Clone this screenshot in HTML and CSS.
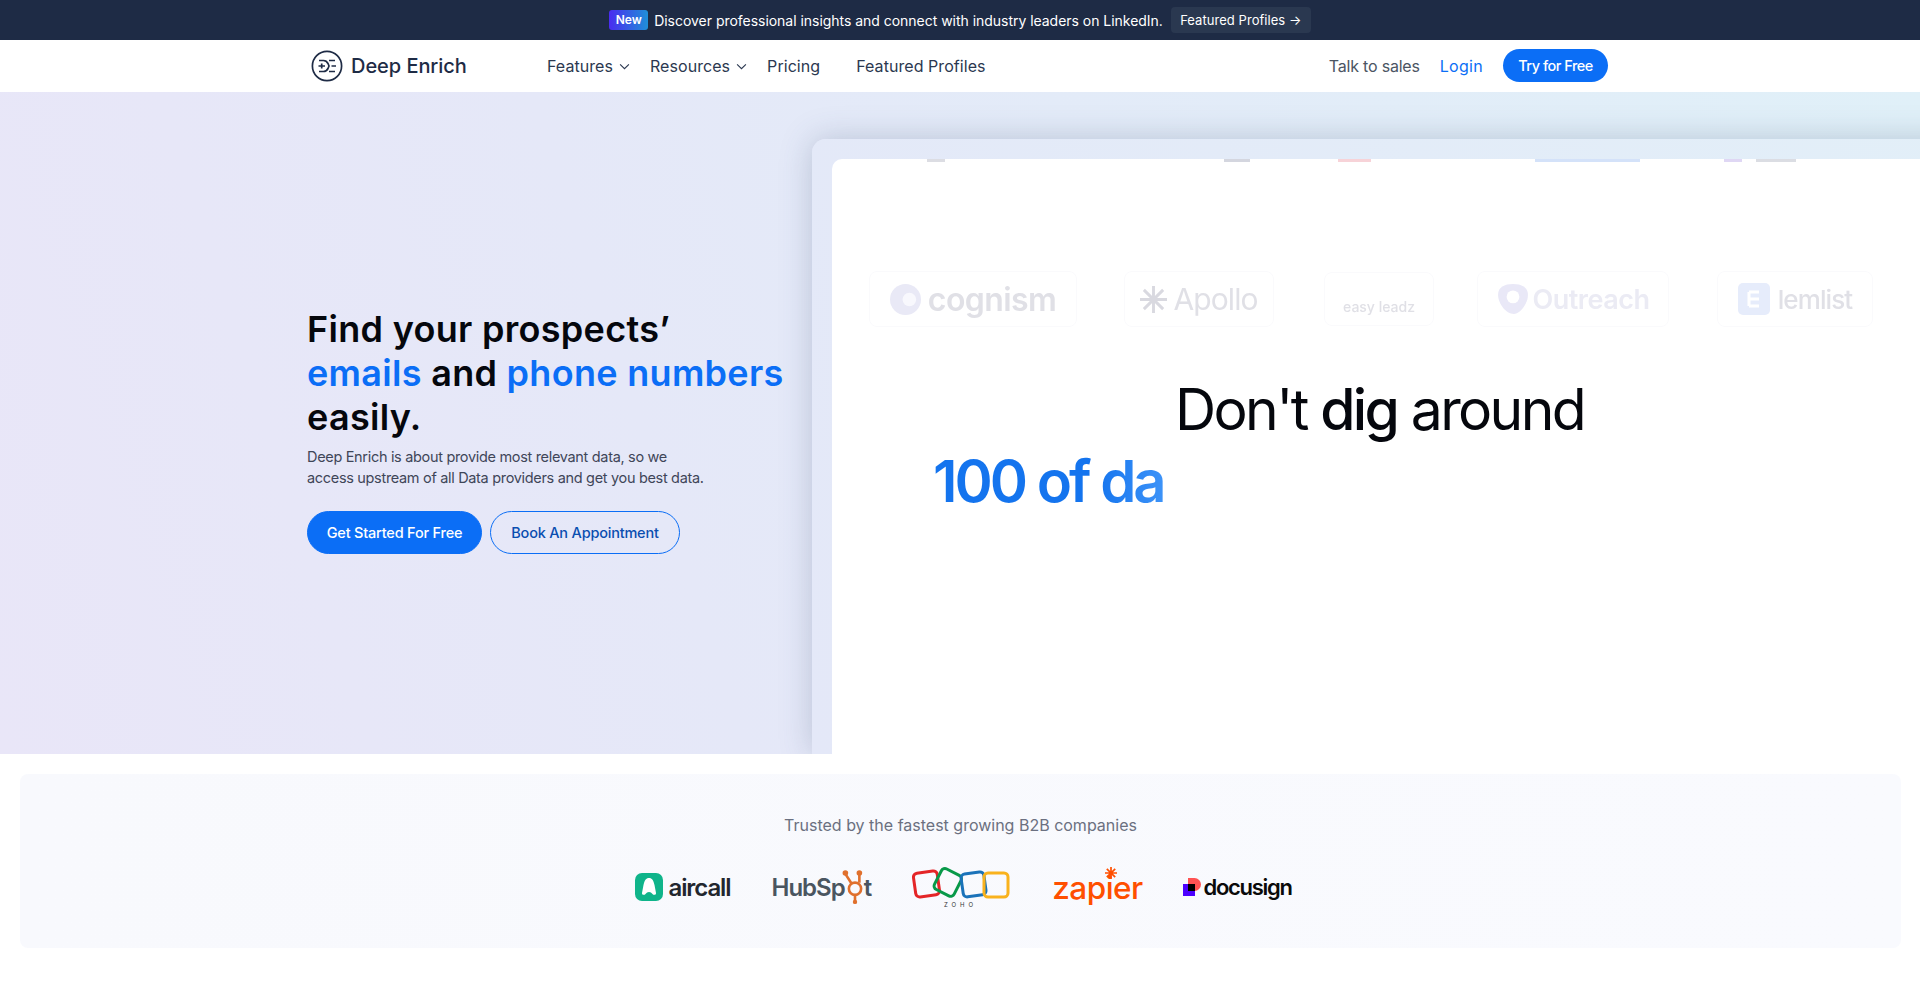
FILE: index.html
```html
<!DOCTYPE html>
<html lang="en">
<head>
<meta charset="utf-8">
<title>Deep Enrich</title>
<link rel="stylesheet" href="styles.css">
</head>
<body>
<div class="topbar">
  <span class="badge">New</span>
  <span class="topbar-text">Discover professional insights and connect with industry leaders on LinkedIn.</span>
  <a class="topbar-btn">Featured Profiles →</a>
</div>
<header class="nav">
  <a class="brand">
    <svg class="brand-icon" viewBox="0 0 32 32" fill="none" stroke="#1e2b45" stroke-width="1.7">
      <circle cx="16" cy="16" r="14.6"/>
      <path d="M8 10.500h4.500c2 0 3.500 1 4.500 3l1 2.500-1 2.500c-1 2-2.500 3-4.500 3H8M18 10.500h6M20.500 16H25M18 21.500h6M7.500 16H14M10.700 13.500v5"/>
    </svg>
    <span>Deep Enrich</span>
  </a>
  <nav class="menu">
    <a class="menu-item">Features<svg class="chev" viewBox="0 0 10 6"><path d="M1 1l4 4 4-4"/></svg></a>
    <a class="menu-item">Resources<svg class="chev" viewBox="0 0 10 6"><path d="M1 1l4 4 4-4"/></svg></a>
    <a class="menu-item pricing">Pricing</a>
    <a class="menu-item">Featured Profiles</a>
  </nav>
  <div class="nav-right">
    <a class="sales">Talk to sales</a>
    <a class="login">Login</a>
    <a class="try">Try for Free</a>
  </div>
</header>
<section class="hero">
  <div class="hero-copy">
    <h1>Find your prospects’<br><em>emails</em> and <em>phone numbers</em><br>easily.</h1>
    <p>Deep Enrich is about provide most relevant data, so we<br>access upstream of all Data providers and get you best data.</p>
    <div class="cta">
      <a class="btn btn-solid">Get Started For Free</a>
      <a class="btn btn-line">Book An Appointment</a>
    </div>
  </div>
  <div class="window">
    <div class="screen">
      <div class="clipped">
        <i class="c1"></i><i class="c2"></i><i class="c3"></i><i class="c4"></i><i class="c5"></i><i class="c6"></i>
      </div>
      <div class="partners">
        <div class="partner p-cognism"><svg viewBox="0 0 32 32"><circle cx="16" cy="16" r="16" fill="#e9e9f6"/><circle cx="20" cy="16" r="7" fill="#f8f8fd"/></svg><span>cognism</span></div>
        <div class="partner p-apollo"><svg viewBox="0 0 28 28" stroke="#d9d9e0" stroke-width="3"><path d="M14 0v28M0 14h28M4 4l20 20M24 4L4 24"/></svg><span>Apollo</span></div>
        <div class="partner p-easy"><span>easy leadz</span></div>
        <div class="partner p-outreach"><svg viewBox="0 0 30 30"><path d="M15 1c8 0 14 3 14 10 0 9-8 18-13 18C8 29 1 19 1 11 1 4 7 1 15 1z" fill="#e9e8f7"/><circle cx="15" cy="13" r="6" fill="#fff"/></svg><span>Outreach</span></div>
        <div class="partner p-lemlist"><svg viewBox="0 0 32 32"><rect width="32" height="32" rx="5" fill="#e6ecfb"/><path d="M11 9h10M11 16h10M11 23h10M11 9v14" stroke="#fff" stroke-width="3" fill="none"/></svg><span>lemlist</span></div>
      </div>
      <h2 class="dig">Don't <b>dig</b> around</h2>
      <div class="hundred">100 of da</div>
    </div>
  </div>
</section>
<section class="trusted">
  <p>Trusted by the fastest growing B2B companies</p>
  <div class="logos">
    <div class="logo aircall">
      <svg viewBox="0 0 28 28"><rect width="28" height="28" rx="7" fill="#0fb48a"/><path d="M14 5c3 0 4.500 2.500 5.500 7l1.500 8c.3 2-2.500 2.500-3.500 1-1-1.300-2-2-3.500-2s-2.500.7-3.500 2c-1 1.500-3.800 1-3.500-1l1.500-8C9.500 7.500 11 5 14 5z" fill="#fff"/></svg>
      <span>aircall</span>
    </div>
    <div class="logo hubspot">
      <span>HubSp</span>
      <svg viewBox="0 0 32 40" fill="none" stroke="#e0702d" stroke-width="3"><circle cx="16" cy="22" r="7"/><path d="M5 5l7 11M21 5v10M16 29v7"/><circle cx="5" cy="4" r="3.200" fill="#e0702d" stroke="none"/><circle cx="21" cy="4" r="3.200" fill="#e0702d" stroke="none"/><circle cx="16" cy="37" r="2.500" fill="#e0702d" stroke="none"/></svg>
      <span>t</span>
    </div>
    <div class="logo zoho">
      <svg viewBox="0 0 98 34" fill="none" stroke-width="3">
        <rect x="2.500" y="5" width="24" height="24" rx="4" transform="rotate(-8 14 17)" stroke="#e42527"/>
        <rect x="25" y="4" width="22" height="23" rx="4" transform="rotate(27 36 15)" stroke="#089949"/>
        <rect x="50" y="6" width="23" height="23" rx="4" transform="rotate(-8 61 17)" stroke="#1a72b9"/>
        <rect x="72" y="6" width="24" height="24" rx="4" stroke="#f9b21d"/>
      </svg>
      <span>ZOHO</span>
    </div>
    <div class="logo zapier">
      <svg viewBox="0 0 12 12" stroke="#ff4f00" stroke-width="1.700"><path d="M6 0v12M0 6h12M1.800 1.800l8.400 8.400M10.200 1.800l-8.400 8.400"/></svg>
      <span>zapier</span>
    </div>
    <div class="logo docusign">
      <svg viewBox="0 0 18 18"><rect x="0" y="6" width="12" height="12" fill="#4c00ff"/><path d="M5 0h6.500a6.500 6.500 0 0 1 0 13H5z" fill="#ff5252"/><rect x="5" y="6" width="7" height="7" fill="#000"/></svg>
      <span>docusign</span>
    </div>
  </div>
</section>
</body>
</html>
```
FILE: styles.css
```css
* { box-sizing: border-box; }
html, body { margin: 0; height: 100%; }
body { background: #fff; font-family: Inter, "Open Sans", sans-serif; color: #1e2b45; overflow: hidden; }
a { text-decoration: none; color: inherit; }
svg { flex: none; }

.topbar { height: 40px; background: #1e2b45; display: flex; align-items: center; justify-content: center; color: #fff; font-size: 14px; letter-spacing: -0.03px; }
.badge { width: 39px; height: 20px; border-radius: 3px; background: linear-gradient(90deg, #4a2cf0, #1f8fd8); font-size: 12px; font-weight: 600; line-height: 20px; text-align: center; margin-right: 6px; }
.topbar-text { margin-right: 8px; }
.topbar-btn { width: 140px; height: 26px; line-height: 26px; text-align: center; border-radius: 4px; background: #2a3850; font-size: 13px; letter-spacing: 0.05px; }

.nav { height: 52px; display: flex; align-items: center; padding: 0 312px 0 311px; }
.brand { display: flex; align-items: center; gap: 8px; width: 236px; font-size: 20px; font-weight: 500; letter-spacing: -0.05px; }
.brand-icon { width: 32px; height: 32px; }
.menu { display: flex; align-items: center; font-size: 16px; letter-spacing: 0.06px; color: #2b3850; }
.menu-item { display: flex; align-items: center; margin-right: 20px; }
.pricing { margin-right: 36px; }
.chev { width: 11px; height: 7px; margin-left: 6px; fill: none; stroke: #2b3850; stroke-width: 1; }
.nav-right { margin-left: auto; display: flex; align-items: center; font-size: 16px; letter-spacing: -0.2px; }
.sales { color: #4b5563; margin-right: 20px; }
.login { color: #0b6ef6; margin-right: 20px; letter-spacing: 0.3px; }
.try { width: 105px; height: 33px; line-height: 33px; margin-top: -1px; text-align: center; border-radius: 17px; background: #0b6ef6; color: #fff; font-size: 14.500px; font-weight: 500; letter-spacing: -0.5px; }

.hero { height: 662px; display: flex; overflow: hidden; background: linear-gradient(72deg, #e9e6f8 0%, #e5e8f8 35%, #e0f0f8 100%); }
.hero-copy { width: 812px; flex: none; padding: 0 0 0 307px; align-self: center; margin-top: 15px; }
h1 { margin: 0; font-size: 36px; line-height: 44px; font-weight: 600; color: #05070d; letter-spacing: 0.3px; white-space: nowrap; }
h1 em { font-style: normal; color: #0b6ef6; }
.hero-copy p { margin: 7px 0 0; font-size: 14.500px; line-height: 21.500px; color: #3f4658; letter-spacing: -0.32px; white-space: nowrap; }
.cta { display: flex; gap: 8px; margin-top: 22.500px; }
.btn { height: 43px; line-height: 41px; text-align: center; border-radius: 22px; font-size: 14.500px; font-weight: 500; border: 1px solid #0b6ef6; letter-spacing: -0.2px; }
.btn-solid { width: 175px; background: #0b6ef6; color: #fff; }
.btn-line { width: 190px; color: #0a4eb0; }

.window { flex: none; width: 1200px; margin-top: 47px; padding: 20px 0 0 20px; border-radius: 14px 0 0 0; background: linear-gradient(72deg, #e4e8f8, #e2eff8); box-shadow: 0 0 32px rgba(60, 80, 120, 0.26); }
.screen { height: 100%; background: #fff; border-radius: 10px 0 0 0; overflow: hidden; }
.clipped { display: flex; height: 3px; align-items: flex-start; padding-left: 95px; }
.clipped i { display: block; height: 3px; opacity: .5; }
.c1 { width: 18px; background: #b9bcc8; }
.c2 { width: 26px; margin-left: 279px; background: #a9aec0; }
.c3 { width: 33px; margin-left: 88px; background: #f0a8b2; }
.c4 { width: 105px; margin-left: 164px; background: #a9c6f4; }
.c5 { width: 18px; margin-left: 84px; background: #c0b0ea; }
.c6 { width: 40px; margin-left: 14px; background: #b8bcc8; }

.partners { display: flex; align-items: center; margin-top: 109px; padding-left: 37px; color: #e0e0e6; font-weight: 600; filter: blur(0.7px); }
.partner { display: flex; align-items: center; justify-content: center; height: 56px; border: 1px solid #fafafc; border-radius: 8px; }
.partner span { display: block; }
.p-cognism { width: 208px; gap: 7px; font-size: 32px; letter-spacing: -.6px; }
.p-cognism svg { width: 31px; height: 31px; }
.p-apollo { width: 150px; margin-left: 47px; gap: 6px; font-size: 30px; font-weight: 400; letter-spacing: -.9px; }
.p-apollo svg { width: 27px; height: 27px; }
.p-easy { width: 110px; margin-left: 50px; height: 54px; font-size: 14px; font-weight: 500; align-items: flex-end; padding-bottom: 10px; }
.p-outreach { width: 192px; margin-left: 43px; gap: 4px; font-size: 27px; color: #ebebf4; letter-spacing: -.5px; }
.p-outreach svg { width: 32px; height: 32px; }
.p-lemlist { width: 156px; margin-left: 48px; gap: 8px; font-size: 26px; font-weight: 500; letter-spacing: -.9px; }
.p-lemlist svg { width: 32px; height: 32px; }

.dig { margin: 51px 0 0 343px; font-size: 57px; line-height: 64px; font-weight: 400; color: #05070d; letter-spacing: -2.600px; white-space: nowrap; }
.dig b { font-weight: 500; }
.hundred { margin: 3px 0 0 101px; font-size: 58px; line-height: 72px; font-weight: 600; letter-spacing: -3px; white-space: nowrap; width: fit-content; background: linear-gradient(90deg, #1474ee 70%, #3d93f8); -webkit-background-clip: text; background-clip: text; color: transparent; }

.trusted { margin: 20px 19px 0 20px; height: 174px; border-radius: 8px; background: linear-gradient(90deg, #f8f9fd, #f9fafe); padding-top: 40px; text-align: center; }
.trusted p { margin: 0; font-size: 16px; line-height: 22px; color: #6b7080; letter-spacing: 0; }
.logos { display: flex; align-items: center; justify-content: center; height: 60px; margin-top: 21px; padding-left: 6px; }
.logo { display: flex; align-items: center; flex: none; }
.aircall { width: 97px; gap: 6px; font-size: 24px; font-weight: 600; color: #22262e; letter-spacing: -1.100px; }
.aircall svg { width: 28px; height: 28px; }
.hubspot { width: 99px; margin-left: 40px; font-size: 24px; font-weight: 600; color: #4a5560; letter-spacing: -1px; }
.hubspot svg { width: 28px; height: 36px; margin: 0 -5px 0 -4px; }
.zoho { width: 98px; margin-left: 41px; flex-direction: column; color: #333; font-size: 6px; letter-spacing: 4px; }
.zoho svg { width: 98px; height: 34px; }
.zapier { width: 90px; margin-left: 43px; position: relative; font-size: 31.500px; color: #ff4f00; font-weight: 500; letter-spacing: -.5px; justify-content: center; }
.zapier svg { position: absolute; left: 52px; top: -1px; width: 12px; height: 12px; }
.docusign { width: 110px; margin-left: 40px; gap: 3px; font-size: 22px; font-weight: 600; color: #0a0a0a; letter-spacing: -1.300px; }
.docusign svg { width: 18px; height: 18px; }
```
